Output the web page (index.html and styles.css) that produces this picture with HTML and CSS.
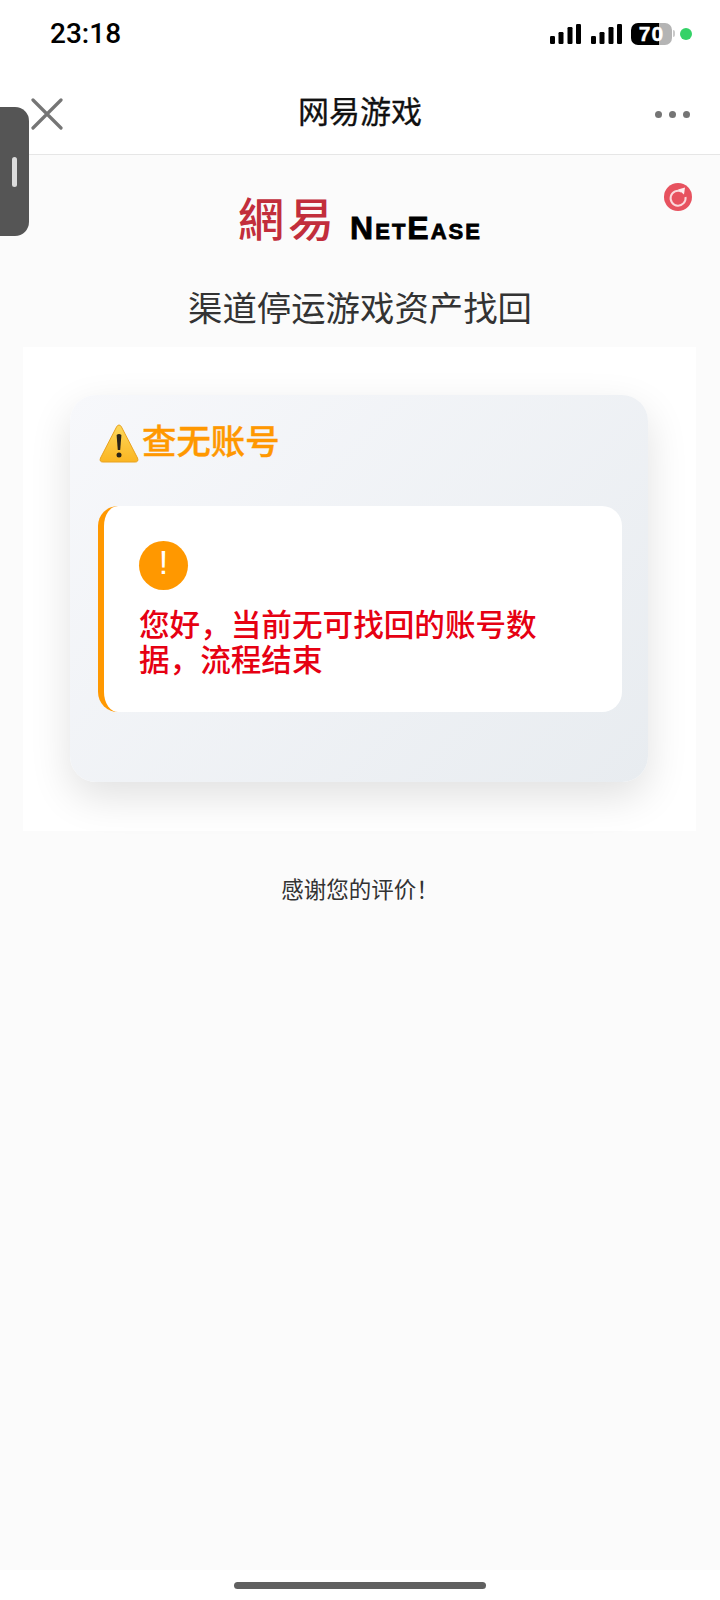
FILE: index.html
```html
<!DOCTYPE html>
<html lang="zh">
<head>
<meta charset="utf-8">
<title>网易游戏</title>
<link rel="stylesheet" href="styles.css">
</head>
<body>
<div class="page">
  <header class="status">
    <span class="time">23:18</span>
    <div class="status-right">
      <svg class="signal" width="32" height="22" viewBox="0 0 32 22"><rect x="0" y="14" width="5" height="8" rx="1.2"/><rect x="8.500" y="10" width="5" height="12" rx="1.2"/><rect x="17.500" y="5" width="5" height="17" rx="1.200"/><rect x="26" y="2" width="5" height="20" rx="1.200"/></svg>
      <svg class="signal" width="32" height="22" viewBox="0 0 32 22"><rect x="0" y="14" width="5" height="8" rx="1.2"/><rect x="8.500" y="10" width="5" height="12" rx="1.2"/><rect x="17.500" y="5" width="5" height="17" rx="1.200"/><rect x="26" y="2" width="5" height="20" rx="1.200"/></svg>
      <div class="battery"><span class="battery-num">70</span></div>
      <span class="battery-tip"></span>
      <span class="dot-green"></span>
    </div>
  </header>
  <nav class="nav">
    <svg class="close" width="32" height="32" viewBox="0 0 32 32"><path d="M2 2 L30 30 M30 2 L2 30"/></svg>
    <h1 class="nav-title">网易游戏</h1>
    <div class="more"><i></i><i></i><i></i></div>
  </nav>
  <main class="main">
    <div class="logo"><span class="logo-cn">網易</span><span class="logo-en">NetEase</span></div>
    <h2 class="title">渠道停运游戏资产找回</h2>
    <section class="panel">
      <div class="card">
        <div class="card-head">
          <svg class="warn" width="40" height="40" viewBox="0 0 40 40">
            <defs><linearGradient id="wg" x1="0" y1="0" x2="0" y2="1"><stop offset="0" stop-color="#fdd85a"/><stop offset="1" stop-color="#fbb522"/></linearGradient></defs>
            <path d="M20 2 Q21.500 2 22.500 4 L38.500 35 Q40 39 36 39 L4 39 Q0 39 1.500 35 L17.500 4 Q18.500 2 20 2 Z" fill="url(#wg)" stroke="#e9a21f" stroke-width="1"/>
            <path d="M17.600 12 Q20 10 22.400 12 L21.200 27 L18.800 27 Z" fill="#2b2418"/>
            <circle cx="20" cy="32" r="2.500" fill="#2b2418"/>
          </svg>
          <span class="card-title">查无账号</span>
        </div>
        <div class="notice">
          <div class="notice-icon">!</div>
          <p class="notice-text">您好，当前无可找回的账号数据，流程结束</p>
        </div>
      </div>
    </section>
    <p class="thanks">感谢您的评价！</p>
    <div class="handle"><i></i></div>
    <div class="refresh">
      <svg width="28" height="28" viewBox="0 0 28 28"><circle cx="14" cy="14" r="14" fill="#e7525f"/><path d="M17.500 8.500 A7.500 7.500 0 1 0 21.500 14" fill="none" stroke="#fbd9dc" stroke-width="2"/><path d="M14 6.500 L21 4.500 L20 11.500 Z" fill="#fdecee"/></svg>
    </div>
  </main>
  <footer class="home"><span class="home-bar"></span></footer>
</div>
</body>
</html>
```
FILE: styles.css
```css
* { box-sizing: border-box; }
html, body { margin: 0; padding: 0; }
body { font-family: "Noto Sans CJK SC", "Noto Sans", sans-serif; background: #fff; color: #333; }
.page { width: 720px; height: 1600px; display: flex; flex-direction: column; }

.status { height: 76px; flex: none; display: flex; align-items: flex-start; justify-content: space-between; padding: 17px 28px 0 50px; background: #fff; }
.time { font-family: Roboto, sans-serif; font-size: 28px; font-weight: 500; line-height: 34px; color: #000; }
.status-right { display: flex; align-items: flex-start; padding-top: 5px; }
.signal { fill: #000; margin-right: 9px; }
.signal + .signal { margin-right: 8px; }
.battery { width: 41px; height: 22px; margin-top: 1px; border-radius: 7px; background: linear-gradient(90deg, #000 0, #000 28px, #b4b4b4 28px, #b4b4b4 100%); text-align: center; }
.battery-num { display: block; font-family: "Liberation Sans", sans-serif; font-weight: 700; font-size: 21px; line-height: 22px; letter-spacing: 1px; color: #fff; -webkit-text-stroke: 0.4px #fff; }
.battery-tip { width: 2px; height: 7px; margin: 8px 5px 0 1px; background: #c9c9c9; border-radius: 0 2px 2px 0; }
.dot-green { width: 12px; height: 12px; margin-top: 6px; border-radius: 50%; background: #34d267; }

.nav { height: 79px; flex: none; display: flex; align-items: center; justify-content: space-between; position: relative; padding: 0 30px 2px 31px; background: #fff; border-bottom: 1px solid #e6e6e6; }
.close { fill: none; stroke: #757575; stroke-width: 3.200; stroke-linecap: round; }
.nav-title { margin: 0; font-size: 31px; font-weight: 400; line-height: 40px; color: #111; position: absolute; left: 0; right: 0; top: 14px; text-align: center; -webkit-text-stroke: 0.3px #111; }
.more { display: flex; gap: 7px; }
.more i { width: 7px; height: 7px; border-radius: 50%; background: #757575; }

.main { flex: 1; position: relative; background: #fbfbfb; padding-top: 32px; }
.logo { display: flex; align-items: flex-end; justify-content: center; height: 56px; gap: 12px; }
.logo-cn { font-family: "Noto Sans CJK TC", "Noto Sans CJK SC", sans-serif; font-size: 46px; line-height: 54px; color: #c22e3c; letter-spacing: 4px; font-weight: 500; }
.logo-en { font-family: "Liberation Sans", sans-serif; font-size: 32px; line-height: 30px; font-weight: 700; font-variant: small-caps; color: #000; letter-spacing: 2px; -webkit-text-stroke: 0.8px #000; }
.title { margin: 40px 0 0; text-align: center; font-size: 34.400px; font-weight: 400; line-height: 46px; color: #333; }
.panel { margin: 18px 24px 0 23px; height: 484px; padding: 48px 48px 0 47px; background: #fff; }
.card { height: 387px; border-radius: 26px; padding: 25px 26px 0 28px; background: linear-gradient(135deg, #f7f8fb 0%, #e8ecf0 100%); box-shadow: 0 15px 42px rgba(0, 0, 0, 0.12); }
.card-head { display: flex; align-items: center; height: 48px; }
.warn { margin-left: 1px; margin-top: -3px; }
.card-title { font-size: 34.400px; font-weight: 500; line-height: 44px; color: #ff9800; margin: -11px 0 0 3px; -webkit-text-stroke: 0.4px #ff9800; }
.notice { margin-top: 38px; height: 206px; padding: 35px 60px 0 35px; background: #fff; border-left: 6px solid #ff9800; border-radius: 20px; }
.notice-icon { width: 49px; height: 49px; border-radius: 50%; background: #ff9800; color: #fff; font-family: "Liberation Sans", sans-serif; font-size: 34px; line-height: 42px; font-weight: 400; text-align: center; }
.notice-text { margin: 16px 0 0; font-size: 30.600px; line-height: 35px; font-weight: 500; color: #e60012; }
.thanks { margin: 39px 0 0; text-align: center; font-size: 22.500px; line-height: 36px; color: #333; }

.handle { position: absolute; left: 0; top: -48px; width: 29px; height: 129px; background: #555; border-radius: 0 14px 14px 0; display: flex; align-items: center; justify-content: center; }
.handle i { width: 5px; height: 30px; border-radius: 3px; background: #dcdcdc; }
.refresh { position: absolute; left: 664px; top: 28px; width: 28px; height: 28px; }
.refresh svg { display: block; }

.home { height: 30px; flex: none; background: #fff; display: flex; justify-content: center; padding-top: 12px; }
.home-bar { width: 252px; height: 7px; border-radius: 4px; background: #606060; }
```
